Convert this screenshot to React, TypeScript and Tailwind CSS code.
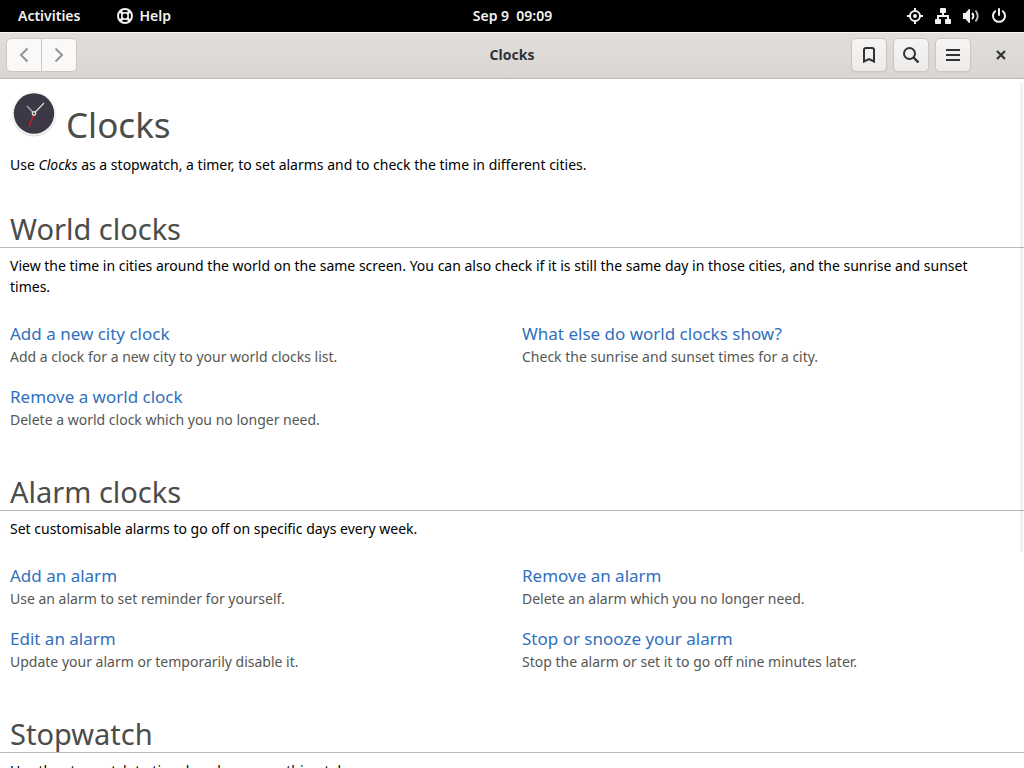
import type { ReactNode } from 'react';

type Topic = { title: string; desc: string };
type SectionData = { title: string; intro: string; topics: Topic[] };

const sections: SectionData[] = [
  {
    title: 'World clocks',
    intro:
      'View the time in cities around the world on the same screen. You can also check if it is still the same day in those cities, and the sunrise and sunset times.',
    topics: [
      { title: 'Add a new city clock', desc: 'Add a clock for a new city to your world clocks list.' },
      { title: 'What else do world clocks show?', desc: 'Check the sunrise and sunset times for a city.' },
      { title: 'Remove a world clock', desc: 'Delete a world clock which you no longer need.' },
    ],
  },
  {
    title: 'Alarm clocks',
    intro: 'Set customisable alarms to go off on specific days every week.',
    topics: [
      { title: 'Add an alarm', desc: 'Use an alarm to set reminder for yourself.' },
      { title: 'Remove an alarm', desc: 'Delete an alarm which you no longer need.' },
      { title: 'Edit an alarm', desc: 'Update your alarm or temporarily disable it.' },
      { title: 'Stop or snooze your alarm', desc: 'Stop the alarm or set it to go off nine minutes later.' },
    ],
  },
  {
    title: 'Stopwatch',
    intro: 'Use the stopwatch to time how long something takes.',
    topics: [],
  },
];

function HelpIcon() {
  return (
    <svg width="16" height="16" viewBox="0 0 16 16" fill="none" stroke="#f2f2f2" aria-hidden="true">
      <circle cx="8" cy="8" r="7" strokeWidth="2" />
      <circle cx="8" cy="8" r="3.2" strokeWidth="1.6" />
      <path d="M3 3l3 3M13 3l-3 3M3 13l3-3M13 13l-3-3" strokeWidth="2.6" />
    </svg>
  );
}

function LocationIcon() {
  return (
    <svg width="16" height="16" viewBox="0 0 16 16" fill="none" stroke="#f2f2f2" aria-hidden="true">
      <circle cx="8" cy="8" r="5" strokeWidth="2" />
      <circle cx="8" cy="8" r="2" fill="#f2f2f2" stroke="none" />
      <path d="M8 0v3M8 13v3M0 8h3M13 8h3" strokeWidth="2" />
    </svg>
  );
}

function NetworkIcon() {
  return (
    <svg width="16" height="16" viewBox="0 0 16 16" fill="#f2f2f2" aria-hidden="true">
      <rect x="5" y="0" width="6" height="5" rx="0.8" />
      <rect x="0" y="11" width="6" height="5" rx="0.8" />
      <rect x="10" y="11" width="6" height="5" rx="0.8" />
      <path d="M7 4h2v3h5v5h-2V9H4v3H2V7h5z" />
    </svg>
  );
}

function VolumeIcon() {
  return (
    <svg width="16" height="16" viewBox="0 0 16 16" fill="none" aria-hidden="true">
      <path d="M0 5h2.500L6 1h1v14H6l-3.500-4H0z" fill="#f2f2f2" />
      <path d="M9 5q2.800 3 0 6" stroke="#f2f2f2" strokeWidth="2" />
      <path d="M12.500 2.500q4.500 5.500 0 11" stroke="#c4c4c4" strokeWidth="1.800" />
    </svg>
  );
}

function PowerIcon() {
  return (
    <svg width="16" height="16" viewBox="0 0 16 16" fill="none" stroke="#f2f2f2" strokeWidth="2" strokeLinecap="round" aria-hidden="true">
      <path d="M4.200 3.200a6 6 0 1 0 7.600 0M8 1v6" />
    </svg>
  );
}

function ClockLogo() {
  return (
    <svg width="46" height="46" viewBox="0 0 46 46" fill="none" aria-hidden="true">
      <circle cx="23" cy="23.500" r="22" fill="#deddda" />
      <circle cx="23" cy="22.500" r="22" fill="#f6f5f4" />
      <circle cx="23" cy="22.500" r="20.200" fill="#3d3846" />
      <path d="M23 22.500L16 15" stroke="#9a9996" strokeWidth="1.800" />
      <path d="M23 22.500L33 12" stroke="#deddda" strokeWidth="1.200" />
      <path d="M23 22.500L18 36" stroke="#e01b24" strokeWidth="1.200" />
      <circle cx="23" cy="22.500" r="1.700" fill="#3d3846" stroke="#deddda" strokeWidth="1.400" />
    </svg>
  );
}

function ToolButton({ label, children }: { label: string; children: ReactNode }) {
  return (
    <button
      type="button"
      aria-label={label}
      className="flex h-[34px] w-[36px] items-center justify-center rounded-[5px] border border-[#cdc7c2] bg-linear-to-b from-[#f6f5f4] to-[#edebe9] shadow-xs"
    >
      {children}
    </button>
  );
}

function Section({ data }: { data: SectionData }) {
  return (
    <section>
      <h2 className="border-b border-[#babdb6] px-[10px] text-[29px] leading-[37px] text-[#4c4c4a]">{data.title}</h2>
      <p className="pt-[7px] pr-6 pl-[10px] text-black">{data.intro}</p>
      {data.topics.length > 0 && (
        <ul className="mt-[25px] mb-[43px] grid grid-cols-2 gap-y-[18px]">
          {data.topics.map((t) => (
            <li key={t.title} className="px-[10px]">
              <a href="#" className="block text-[17px] leading-[24px] text-[#3070bd]">
                {t.title}
              </a>
              <p className="text-[#555753]">{t.desc}</p>
            </li>
          ))}
        </ul>
      )}
    </section>
  );
}

export default function App() {
  return (
    <div className="flex h-screen flex-col overflow-hidden bg-white font-['Noto_Sans',sans-serif] text-[14px] leading-[21px]">
      <header className="grid h-8 shrink-0 grid-cols-[1fr_auto_1fr] items-center bg-black pr-[17px] pl-[18px] text-[14px] font-semibold text-[#f2f2f2]">
        <div className="flex items-center gap-[37px]">
          <button type="button" className="pb-[2px]">Activities</button>
          <button type="button" className="flex items-center gap-[6px]">
            <HelpIcon />
            <span className="pb-[2px]">Help</span>
          </button>
        </div>
        <button type="button" className="pb-[2px] whitespace-pre">Sep 9  09:09</button>
        <button type="button" aria-label="System menu" className="flex items-center justify-end gap-3">
          <LocationIcon />
          <NetworkIcon />
          <VolumeIcon />
          <PowerIcon />
        </button>
      </header>

      <div className="grid h-[47px] shrink-0 grid-cols-[1fr_auto_1fr] items-center border-t border-b border-t-[#f6f5f4] border-b-[#bfb8b1] bg-linear-to-b from-[#e1dedb] to-[#dad6d2] px-[6px] pb-px">
        <div className="flex">
          <button type="button" aria-label="Back" className="flex h-[34px] w-[36px] items-center justify-center rounded-l-[5px] border border-[#cdc7c2] bg-[#faf9f8]">
            <svg width="16" height="16" viewBox="0 0 16 16" fill="none" stroke="#929595" strokeWidth="2" aria-hidden="true">
              <path d="M11.500 1.500L5 8l6.500 6.500" />
            </svg>
          </button>
          <button type="button" aria-label="Forward" className="flex h-[34px] w-[35px] items-center justify-center rounded-r-[5px] border border-l-0 border-[#cdc7c2] bg-[#faf9f8]">
            <svg width="16" height="16" viewBox="0 0 16 16" fill="none" stroke="#929595" strokeWidth="2" aria-hidden="true">
              <path d="M4.500 1.500L11 8l-6.500 6.500" />
            </svg>
          </button>
        </div>
        <h1 className="pb-[2px] text-[14px] font-bold text-[#2e3436]">Clocks</h1>
        <div className="flex items-center justify-end gap-[6px]">
          <ToolButton label="Bookmarks">
            <svg width="16" height="16" viewBox="0 0 16 16" fill="none" stroke="#2e3436" strokeWidth="2" aria-hidden="true">
              <path d="M3 14.500V3q0-2 2-2h6q2 0 2 2v11.500l-5-2.500z" />
            </svg>
          </ToolButton>
          <ToolButton label="Search">
            <svg width="16" height="16" viewBox="0 0 16 16" fill="none" stroke="#2e3436" strokeWidth="2" aria-hidden="true">
              <circle cx="6.500" cy="6.500" r="5.500" />
              <path d="M10.500 10.500l5 5" strokeWidth="2.400" />
            </svg>
          </ToolButton>
          <ToolButton label="Menu">
            <svg width="16" height="16" viewBox="0 0 16 16" fill="#2e3436" aria-hidden="true">
              <path d="M1 2h14v2H1zM1 7h14v2H1zM1 12h14v2H1z" />
            </svg>
          </ToolButton>
          <button type="button" aria-label="Close" className="ml-[7px] flex size-[34px] items-center justify-center">
            <svg width="16" height="16" viewBox="0 0 16 16" fill="none" stroke="#2e3436" strokeWidth="2.200" aria-hidden="true">
              <path d="M4 4l8 8M12 4l-8 8" />
            </svg>
          </button>
        </div>
      </div>

      <main className="relative min-h-0 flex-1 overflow-hidden">
        <div className="flex items-start gap-[9px] pt-[12px] pl-[11px]">
          <ClockLogo />
          <h1 className="pt-[11px] text-[35px] leading-[46px] text-[#4c4c4a]">Clocks</h1>
        </div>
        <p className="mb-[35px] px-[10px] pt-[6px] text-black">
          Use <em>Clocks</em> as a stopwatch, a timer, to set alarms and to check the time in different cities.
        </p>
        {sections.map((s) => (
          <Section key={s.title} data={s} />
        ))}
        <div className="absolute top-[3px] right-px h-[470px] w-[3px] rounded-full bg-black/5" />
      </main>
    </div>
  );
}
